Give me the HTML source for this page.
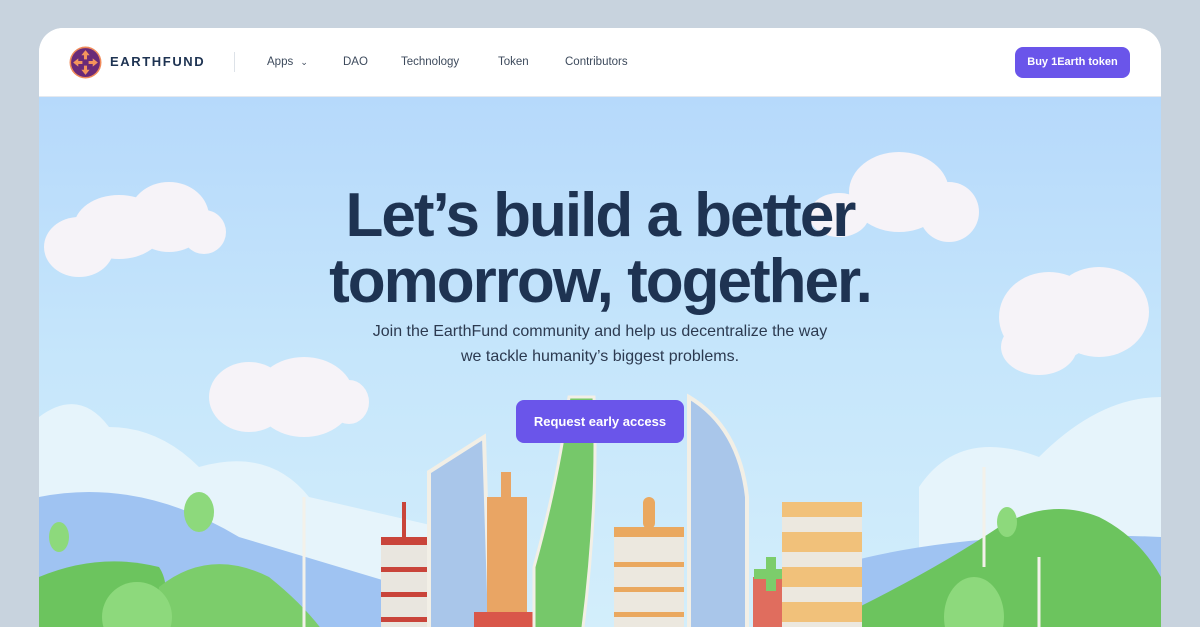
<!DOCTYPE html>
<html><head><meta charset="utf-8"><style>
*{margin:0;padding:0;box-sizing:border-box}
html,body{width:1200px;height:627px;overflow:hidden}
body{background:#c8d3de;font-family:"Liberation Sans",sans-serif;position:relative}
.card{position:absolute;left:39px;top:28px;width:1122px;height:599px;border-radius:24px 24px 0 0;overflow:hidden;background:#fff}
.hdr{position:absolute;left:0;top:0;width:1122px;height:69px;background:#fff;border-bottom:1px solid #e5e9ef}
.hero{position:absolute;left:0;top:69px;width:1122px;height:530px;background:linear-gradient(#b6d9fb,#c6e6fb 50%,#d3eefb)}
.nav{position:absolute;top:27px;line-height:14px;font-size:11.5px;color:#3d4a5c}
h1{position:absolute;left:0;width:1122px;text-align:center;top:86px;font-size:62px;line-height:66px;color:#1e3352;font-weight:bold;letter-spacing:-2px}
.sub{position:absolute;left:0;width:1122px;text-align:center;top:222px;font-size:16px;line-height:25px;color:#2c3a50}
.btn{position:absolute;background:#6a55ea;color:#fff;font-weight:bold;border-radius:8px;text-align:center}
</style></head><body>
<div class="card">
<div class="hdr">
<svg style="position:absolute;left:30px;top:18px" width="33" height="33" viewBox="0 0 32 32"><circle cx="16" cy="16" r="15.5" fill="#f08a5a"/><circle cx="16" cy="16" r="14" fill="#6a2a78"/><g fill="#f4955c"><path d="M16 4l4 5h-2.5v4h-3v-4H12z"/><path d="M16 28l4-5h-2.5v-4h-3v4H12z"/><path d="M4 16l5-4v2.5h4v3H9V20z"/><path d="M28 16l-5-4v2.5h-4v3h4V20z"/></g></svg>
<div style="position:absolute;left:71px;top:26px;line-height:16px;font-size:13px;font-weight:bold;letter-spacing:1.6px;color:#1e3352">EARTHFUND</div>
<div style="position:absolute;left:195px;top:24px;width:1px;height:20px;background:#dde2e8"></div>
<div class="nav" style="left:228px">Apps <span style="font-size:9px;margin-left:4px">&#8964;</span></div>
<div class="nav" style="left:304px">DAO</div>
<div class="nav" style="left:362px">Technology</div>
<div class="nav" style="left:459px">Token</div>
<div class="nav" style="left:526px">Contributors</div>
<div class="btn" style="left:976px;top:19px;width:115px;height:31px;line-height:31px;font-size:11px">Buy 1Earth token</div>
</div>
<div class="hero">
<svg width="1122" height="560" style="position:absolute;left:0;top:0" viewBox="0 0 1122 560">
<g fill="#f6f3f8">
<ellipse cx="80" cy="130" rx="45" ry="32"/><ellipse cx="130" cy="120" rx="40" ry="35"/><ellipse cx="165" cy="135" rx="22" ry="22"/><ellipse cx="40" cy="150" rx="35" ry="30"/>
<ellipse cx="860" cy="95" rx="50" ry="40"/><ellipse cx="910" cy="115" rx="30" ry="30"/><ellipse cx="800" cy="118" rx="30" ry="22"/>
<ellipse cx="1010" cy="220" rx="50" ry="45"/><ellipse cx="1060" cy="215" rx="50" ry="45"/><ellipse cx="1000" cy="250" rx="38" ry="28"/>
<ellipse cx="265" cy="300" rx="50" ry="40"/><ellipse cx="210" cy="300" rx="40" ry="35"/><ellipse cx="310" cy="305" rx="20" ry="22"/>
</g>
<path d="M0 320 Q40 290 70 330 Q120 330 160 370 Q230 350 270 400 L400 430 L400 560 L0 560Z" fill="#e6f4fb"/>
<path d="M880 390 Q920 330 1000 360 Q1060 300 1122 300 L1122 560 L880 560Z" fill="#e6f4fb"/>
<path d="M0 400 Q100 380 200 440 Q300 470 400 500 L400 560 L0 560Z" fill="#9fc3f2"/>
<path d="M760 480 Q900 430 1122 440 L1122 560 L760 560Z" fill="#9fc3f2"/>
<path d="M0 480 Q60 455 120 470 Q140 500 100 560 L0 560Z" fill="#6cc45e"/>
<path d="M120 490 Q170 450 230 480 Q280 520 300 560 L110 560Z" fill="#7ccd6b"/>
<path d="M820 510 Q900 470 960 430 Q1010 400 1060 420 Q1100 440 1122 480 L1122 560 L820 560Z" fill="#6cc45e"/>
<ellipse cx="98" cy="520" rx="35" ry="35" fill="#8dd97c"/><ellipse cx="935" cy="520" rx="30" ry="40" fill="#8dd97c"/>
<g fill="#8dd97c"><ellipse cx="160" cy="415" rx="15" ry="20"/><ellipse cx="20" cy="440" rx="10" ry="15"/><ellipse cx="968" cy="425" rx="10" ry="15"/></g>
<g stroke="#f3f1ea" stroke-width="3"><line x1="265" y1="400" x2="265" y2="560"/><line x1="945" y1="370" x2="945" y2="470"/><line x1="1000" y1="460" x2="1000" y2="560"/></g>
<rect x="342" y="440" width="46" height="120" fill="#e9e6df"/><g fill="#c9443a"><rect x="342" y="440" width="46" height="8"/><rect x="342" y="470" width="46" height="5"/><rect x="342" y="495" width="46" height="5"/><rect x="342" y="520" width="46" height="5"/><rect x="363" y="405" width="4" height="35"/></g>
<path d="M390 375 L445 340 L452 560 L390 560Z" fill="#a9c6ea" stroke="#f2efe6" stroke-width="4"/>
<rect x="448" y="400" width="40" height="120" fill="#e9a564"/><rect x="462" y="375" width="10" height="30" fill="#e9a564"/>
<rect x="435" y="515" width="70" height="45" fill="#d9574a"/><rect x="435" y="530" width="70" height="30" fill="#ede9e2"/>
<path d="M495 470 Q520 380 530 300 L555 300 Q560 420 540 560 L495 560Z" fill="#76c86a" stroke="#f2efe6" stroke-width="3"/>
<rect x="575" y="430" width="70" height="130" fill="#ece8df"/><g fill="#eaa85f"><rect x="575" y="430" width="70" height="10"/><rect x="575" y="465" width="70" height="5"/><rect x="575" y="490" width="70" height="5"/><rect x="575" y="515" width="70" height="5"/><rect x="575" y="540" width="70" height="5"/><rect x="604" y="400" width="12" height="32" rx="6"/></g>
<path d="M650 300 Q700 330 708 400 L708 560 L650 560Z" fill="#a9c6ea" stroke="#f2efe6" stroke-width="4"/>
<rect x="714" y="480" width="55" height="80" fill="#e06d5e"/><path d="M727 460h10v12h12v10h-12v12h-10v-12h-12v-10h12z" fill="#7ccd6b"/>
<rect x="743" y="405" width="80" height="155" fill="#f1c17a"/><g fill="#ece8df"><rect x="743" y="420" width="80" height="15"/><rect x="743" y="455" width="80" height="15"/><rect x="743" y="490" width="80" height="15"/><rect x="743" y="525" width="80" height="15"/></g>
</svg>
<h1>Let’s build a better<br>tomorrow, together.</h1>
<div class="sub">Join the EarthFund community and help us decentralize the way<br>we tackle humanity’s biggest problems.</div>
<div class="btn" style="left:477px;top:303px;width:168px;height:43px;line-height:43px;font-size:13px">Request early access</div>
</div>
</div>
</body></html>
